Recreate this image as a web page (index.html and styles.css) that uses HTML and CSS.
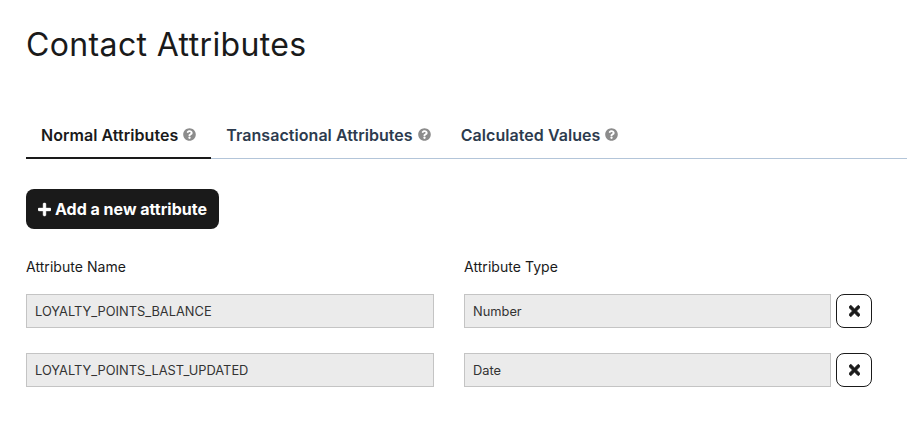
FILE: index.html
```html
<!DOCTYPE html>
<html lang="en">

<head>
  <meta charset="UTF-8">
  <meta name="viewport" content="width=device-width, initial-scale=1.0">
  <title>Contact Attributes</title>
  <link rel="stylesheet" href="styles.css">
</head>

<body>
  <svg class="icon-defs" aria-hidden="true">
    <symbol id="icon-question" viewBox="0 0 512 512">
      <path d="M504 256c0 136.997-111.043 248-248 248S8 392.997 8 256C8 119.083 119.043 8 256 8s248 111.083 248 248zM262.655 90c-54.497 0-89.255 22.957-116.549 63.758-3.536 5.286-2.353 12.415 2.715 16.258l34.699 26.31c5.205 3.947 12.621 3.008 16.665-2.122 17.864-22.658 30.113-35.797 57.303-35.797 20.429 0 45.698 13.148 45.698 32.958 0 14.976-12.363 22.667-32.534 33.976C247.128 238.528 216 254.941 216 296v4c0 6.627 5.373 12 12 12h56c6.627 0 12-5.373 12-12v-1.333c0-28.462 83.186-29.647 83.186-106.667 0-58.002-60.165-102-116.531-102zM256 338c-25.365 0-46 20.635-46 46 0 25.364 20.635 46 46 46s46-20.636 46-46c0-25.365-20.635-46-46-46z" />
    </symbol>
    <symbol id="icon-times" viewBox="0 0 352 512">
      <path d="M242.72 256l100.07-100.07c12.28-12.28 12.28-32.19 0-44.48l-22.24-22.24c-12.28-12.28-32.19-12.28-44.48 0L176 189.28 75.93 89.21c-12.28-12.28-32.19-12.28-44.48 0L9.21 111.45c-12.28 12.28-12.28 32.19 0 44.48L109.28 256 9.21 356.07c-12.28 12.28-12.28 32.19 0 44.48l22.24 22.24c12.28 12.28 32.2 12.28 44.48 0L176 322.72l100.07 100.07c12.28 12.28 32.2 12.28 44.48 0l22.24-22.24c12.28-12.28 12.28-32.19 0-44.48L242.72 256z" />
    </symbol>
    <symbol id="icon-plus" viewBox="0 0 448 512">
      <path d="M416 208H272V64c0-17.67-14.33-32-32-32h-32c-17.67 0-32 14.33-32 32v144H32c-17.67 0-32 14.33-32 32v32c0 17.67 14.33 32 32 32h144v144c0 17.67 14.33 32 32 32h32c17.67 0 32-14.33 32-32V304h144c17.67 0 32-14.33 32-32v-32c0-17.67-14.33-32-32-32z" />
    </symbol>
  </svg>

  <div class="page">
    <h1>Contact Attributes</h1>

    <div class="tabs">
      <a class="tab active">Normal Attributes <svg class="help"><use href="#icon-question" /></svg></a>
      <a class="tab">Transactional Attributes <svg class="help"><use href="#icon-question" /></svg></a>
      <a class="tab">Calculated Values <svg class="help"><use href="#icon-question" /></svg></a>
    </div>

    <button class="add-btn"><svg class="plus"><use href="#icon-plus" /></svg>Add a new attribute</button>

    <div class="attr-grid">
      <label>Attribute Name</label>
      <label>Attribute Type</label>

      <input type="text" value="LOYALTY_POINTS_BALANCE" disabled>
      <div class="type-cell">
        <input type="text" value="Number" disabled>
        <button class="remove-btn"><svg class="times"><use href="#icon-times" /></svg></button>
      </div>

      <input type="text" value="LOYALTY_POINTS_LAST_UPDATED" disabled>
      <div class="type-cell">
        <input type="text" value="Date" disabled>
        <button class="remove-btn"><svg class="times"><use href="#icon-times" /></svg></button>
      </div>
    </div>
  </div>
</body>

</html>
```

FILE: styles.css
```css
body {
  font-family: Inter, 'Liberation Sans', sans-serif;
  color: #1a1a1a;
  background: #fff;
  margin: 0;
}

.icon-defs {
  display: none;
}

.page {
  padding: 25px 0 0 26px;
}

h1 {
  font-size: 32px;
  font-weight: 400;
  letter-spacing: 0.37px;
  line-height: 40px;
  margin: 0 0 51px;
}

.tabs {
  display: flex;
  border-bottom: 1px solid #b3c5d9;
  margin-bottom: 30px;
}

.tab {
  display: flex;
  align-items: center;
  gap: 5px;
  height: 37px;
  padding: 0 15px 6px;
  font-size: 16px;
  font-weight: 600;
  letter-spacing: 0.05px;
  color: #2d3b4e;
  margin-bottom: -1px;
}

.tab.active {
  color: #1a1a1a;
  box-shadow: inset 0 -2px 0 #1a1a1a;
}

.help {
  width: 13px;
  height: 13px;
  fill: #8c8c8c;
}

.add-btn {
  display: flex;
  align-items: center;
  gap: 4px;
  height: 40px;
  padding: 0 12px;
  border: none;
  border-radius: 8px;
  background: #1a1a1a;
  color: #fff;
  font-family: inherit;
  font-size: 16px;
  font-weight: 700;
}

.plus {
  width: 13px;
  height: 15px;
  fill: #fff;
  stroke: #fff;
  stroke-width: 16px;
}

.attr-grid {
  display: grid;
  grid-template-columns: 408px 408px;
  column-gap: 30px;
  margin-top: 28px;
}

.attr-grid label {
  font-size: 14px;
  letter-spacing: 0.05px;
  line-height: 20px;
  margin-bottom: 17px;
}

.attr-grid input {
  box-sizing: border-box;
  width: 100%;
  height: 34px;
  padding: 0 8px;
  margin-bottom: 25px;
  border: 1px solid #c4c4c4;
  background: #ebebeb;
  font-family: inherit;
  font-size: 12.85px;
  color: #333;
}

.type-cell {
  display: flex;
  gap: 5px;
}

.remove-btn {
  display: flex;
  flex: none;
  align-items: center;
  justify-content: center;
  box-sizing: border-box;
  width: 36px;
  height: 34px;
  padding: 0;
  border: 1px solid #1a1a1a;
  border-radius: 8px;
  background: #fff;
}

.times {
  width: 11px;
  height: 16px;
  fill: #1a1a1a;
  stroke: #1a1a1a;
  stroke-width: 24px;
}
```
